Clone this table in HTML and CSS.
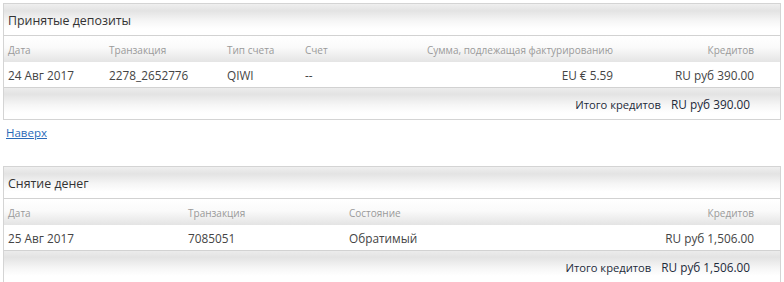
FILE: index.html
```html
<!DOCTYPE html>
<html lang="ru">
<head>
<meta charset="utf-8">
<title>Депозиты и снятие</title>
<link rel="stylesheet" href="styles.css">
</head>
<body>
<section class="panel">
  <div class="title">Принятые депозиты</div>
  <div class="row head cols-dep">
    <span>Дата</span><span>Транзакция</span><span>Тип счета</span><span>Счет</span><span class="r">Сумма, подлежащая фактурированию</span><span class="r">Кредитов</span><span></span>
  </div>
  <div class="row data cols-dep">
    <span>24 Авг 2017</span><span>2278_2652776</span><span>QIWI</span><span>--</span><span class="r">EU € 5.59</span><span class="r">RU руб 390.00</span><span></span>
  </div>
  <div class="total"><span class="label">Итого кредитов</span><span>RU руб 390.00</span></div>
</section>
<div class="back"><a href="#">Наверх</a></div>
<section class="panel">
  <div class="title">Снятие денег</div>
  <div class="row head cols-wd">
    <span>Дата</span><span>Транзакция</span><span>Состояние</span><span class="r">Кредитов</span><span></span>
  </div>
  <div class="row data cols-wd">
    <span>25 Авг 2017</span><span>7085051</span><span>Обратимый</span><span class="r">RU руб 1,506.00</span><span></span>
  </div>
  <div class="total"><span class="label">Итого кредитов</span><span>RU руб 1,506.00</span></div>
</section>
</body>
</html>
```
FILE: styles.css
```css
html, body {
  margin: 0;
  padding: 0;
  background: #fff;
}
body {
  padding: 3px 3px 0 3px;
  font-family: "Open Sans", "Liberation Sans", sans-serif;
  color: #444;
}
.panel {
  border: 1px solid #d4d4d4;
}
.title, .head, .data, .total {
  box-sizing: content-box;
  padding-top: 1px;
}
.title {
  height: 30px;
  display: flex;
  align-items: center;
  padding-left: 4px;
  font-size: 12.4px;
  color: #333;
  border-bottom: 1px solid #d2d2d2;
  background: linear-gradient(to bottom, #efefef 0%, #e3e3e3 22%, #f6f6f6 55%, #fff 80%);
}
.row {
  display: grid;
  align-items: center;
}
.row > span {
  padding: 0 4px;
  white-space: nowrap;
}
.row > span.r {
  text-align: right;
}
.cols-dep {
  grid-template-columns: 101px 118px 78px 1fr 200px 141px 22px;
}
.cols-wd {
  grid-template-columns: 180px 161px 1fr 141px 22px;
}
.head {
  height: 25px;
  font-size: 10px;
  color: #9a9a9a;
  background: linear-gradient(to bottom, #fff 0%, #fafafa 45%, #e4e4e4 100%);
}
.data {
  height: 24px;
  font-size: 11.8px;
  color: #444;
  background: #fff;
  border-bottom: 1px solid #d2d2d2;
}
.total {
  height: 30px;
  display: flex;
  justify-content: flex-end;
  align-items: center;
  gap: 10px;
  padding-right: 30px;
  font-size: 11.8px;
  color: #1d2a3a;
  background: linear-gradient(to bottom, #ececec 0%, #e3e3e3 20%, #f6f6f6 55%, #fff 80%);
}
.total .label {
  font-size: 11.2px;
}
.back {
  padding: 5px 3px 0 3px;
  height: 41px;
  font-size: 11.5px;
  line-height: 16px;
}
.back a {
  color: #2a6ab8;
  text-decoration: underline;
}
```
